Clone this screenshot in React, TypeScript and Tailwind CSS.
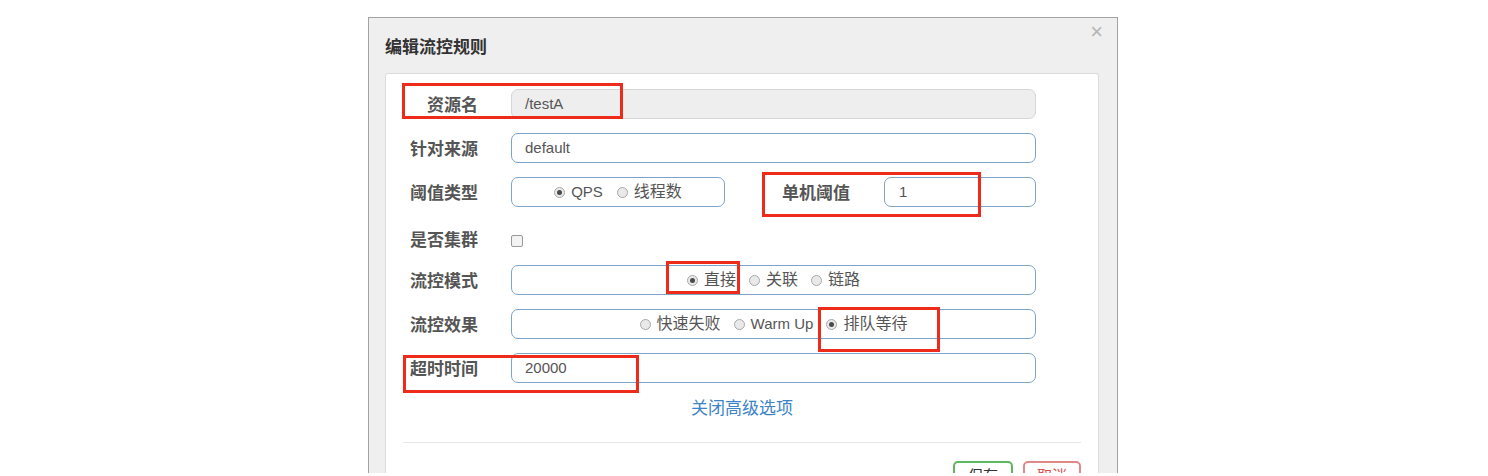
import React from "react";

const font = "font-['Liberation_Sans','Noto_Sans_CJK_SC',sans-serif]";

const Radio = ({ checked, label, latin }: { checked?: boolean; label: string; latin?: boolean }) => (
  <span className="flex items-center gap-[6px]">
    <span className="w-[11px] h-[11px] rounded-full border border-[#a8a8a8] bg-[#e9e9e9] flex items-center justify-center">
      {checked && <span className="w-[5px] h-[5px] rounded-full bg-[#4a4a4a]" />}
    </span>
    <span className={latin ? "text-[15px]" : "text-[16px]"}>{label}</span>
  </span>
);

const Label = ({ children, w = "w-[92px]" }: { children: any; w?: string }) => (
  <div className={`${w} shrink-0 pt-[3px] text-right text-[17px] font-bold text-[#555]`}>{children}</div>
);

const box = "h-[30px] rounded-[7px] border border-[#7ea4ca] bg-white flex items-center";

export default function App() {
  return (
    <div className={`relative w-[1488px] h-[476px] bg-white overflow-hidden ${font}`}>
      <div className="ml-[368px] pt-[17px]">
        <div className="w-[750px] h-[456px] border border-[#a3a3a3] border-b-0 bg-[#efefef] overflow-hidden flex flex-col">
          <div className="h-[55px] shrink-0 pl-[16px] pr-[14px] flex items-start justify-between">
            <div className="pt-[17px] text-[17px] font-bold text-[#333]">编辑流控规则</div>
            <div className="pt-[2px] text-[22px] leading-[24px] text-[#b5b5b5]">×</div>
          </div>

          <div className="ml-[16px] mr-[18px] flex-1 bg-white border border-[#dcdcdc] border-b-0 rounded-t-[3px] pt-[15px] flex flex-col">
            <div className="flex flex-col gap-[14px] text-[#555]">
              <div className="flex items-center h-[30px]">
                <Label>资源名</Label>
                <div className="ml-[33px] w-[525px] h-[30px] rounded-[7px] border border-[#d6d6d6] bg-[#eeeeee] flex items-center pl-[13px] text-[15px]">
                  /testA
                </div>
              </div>

              <div className="flex items-center h-[30px]">
                <Label>针对来源</Label>
                <div className={`ml-[33px] w-[525px] ${box} pl-[13px] text-[15px]`}>default</div>
              </div>

              <div className="flex items-center h-[30px]">
                <Label>阈值类型</Label>
                <div className={`ml-[33px] w-[214px] ${box} justify-center gap-[14px]`}>
                  <Radio checked label="QPS" latin />
                  <Radio label="线程数" />
                </div>
                <Label w="w-[125px]">单机阈值</Label>
                <div className={`ml-[34px] w-[152px] ${box} pl-[14px] text-[15px]`}>1</div>
              </div>

              <div className="flex items-center h-[30px] pt-[6px]">
                <Label>是否集群</Label>
                <span className="ml-[33px] mt-[3px] w-[12px] h-[12px] rounded-[2px] border border-[#9a9a9a] bg-[#f3f3f3]" />
              </div>

              <div className="flex items-center h-[30px]">
                <Label>流控模式</Label>
                <div className={`ml-[33px] w-[525px] ${box} justify-center gap-[13px]`}>
                  <Radio checked label="直接" />
                  <Radio label="关联" />
                  <Radio label="链路" />
                </div>
              </div>

              <div className="flex items-center h-[30px]">
                <Label>流控效果</Label>
                <div className={`ml-[33px] w-[525px] ${box} justify-center gap-[13px]`}>
                  <Radio label="快速失败" />
                  <Radio label="Warm Up" latin />
                  <Radio checked label="排队等待" />
                </div>
              </div>

              <div className="flex items-center h-[30px]">
                <Label>超时时间</Label>
                <div className={`ml-[33px] w-[525px] ${box} pl-[13px] text-[15px]`}>20000</div>
              </div>
            </div>

            <div className="mt-[14px] h-[24px] leading-[24px] text-center text-[17px] text-[#3d84c6]">关闭高级选项</div>

            <div className="mx-[17px] mt-[21px] h-px bg-[#e5e5e5]" />

            <div className="mx-[17px] mt-[18px] flex justify-end gap-[10px]">
              <div className="w-[60px] h-[34px] rounded-[5px] border-2 border-[#5cb85c] bg-white flex items-start justify-center pt-[4px] text-[15px] leading-[18px] text-[#333]">
                保存
              </div>
              <div className="w-[58px] h-[34px] rounded-[5px] border-2 border-[#e08a88] bg-white flex items-start justify-center pt-[4px] text-[15px] leading-[18px] text-[#d9534f]">
                取消
              </div>
            </div>
          </div>
        </div>
      </div>

      {/* annotation boxes */}
      <div className="absolute left-[402px] top-[83px] w-[221px] h-[36px] border-[3px] border-[#ee2a1b]" />
      <div className="absolute left-[762px] top-[172px] w-[219px] h-[45px] border-[3px] border-[#ee2a1b]" />
      <div className="absolute left-[666px] top-[261px] w-[74px] h-[33px] border-[3px] border-[#ee2a1b]" />
      <div className="absolute left-[818px] top-[307px] w-[122px] h-[45px] border-[3px] border-[#ee2a1b]" />
      <div className="absolute left-[403px] top-[355px] w-[236px] h-[38px] border-[3px] border-[#ee2a1b]" />
    </div>
  );
}
